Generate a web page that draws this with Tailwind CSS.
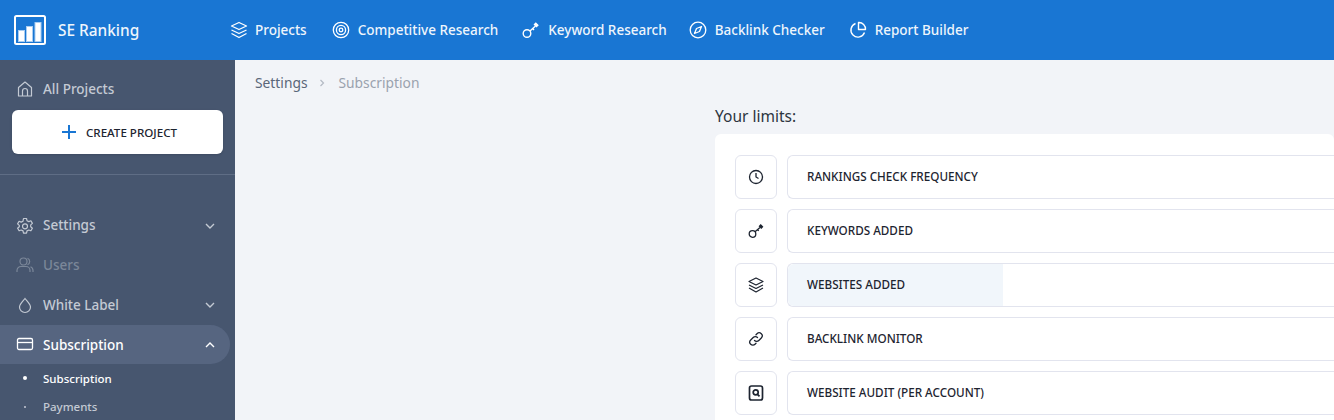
<!DOCTYPE html>
<html>
<head>
<meta charset="utf-8">
<script src="https://cdn.jsdelivr.net/npm/@tailwindcss/browser@4"></script>
</head>
<body class="font-['Noto_Sans',sans-serif] overflow-hidden">
<div class="w-[1334px] h-[420px] overflow-hidden flex flex-col bg-[#f2f4f8]">
  <header class="h-[60px] shrink-0 bg-[#1976d3] flex items-center text-white">
    <div class="w-[230px] shrink-0 pl-[14px] flex items-center gap-[12px]">
      <svg width="32" height="30" viewBox="0 0 32 30" fill="none"><rect x="1" y="1" width="30" height="28" rx="1.500" stroke="#fff" stroke-width="2"/><rect x="4.500" y="15.500" width="6" height="11" fill="#fff" stroke="#a9cdf1"/><rect x="12.500" y="11.500" width="6" height="15" fill="#fff" stroke="#a9cdf1"/><rect x="21" y="7.500" width="6" height="19" fill="#fff" stroke="#a9cdf1"/></svg>
      <span class="text-[15.400px] font-medium text-[#eef5fc] pt-[2px]">SE Ranking</span>
    </div>
    <nav class="flex items-center text-[13.500px] font-medium text-[#eef5fc]">
      <a class="flex items-center gap-[7px]"><svg width="18" height="18" viewBox="0 0 18 18" fill="none" stroke="#fff" stroke-width="1.300" stroke-linejoin="round"><path d="M9 1.500 16.500 5 9 8.500 1.500 5Z"/><path d="M1.500 9 9 12.500 16.500 9"/><path d="M1.500 12.500 9 16.500 16.500 12.500"/></svg>Projects</a>
      <a class="ml-[25px] flex items-center gap-[8px]"><svg width="18" height="18" viewBox="0 0 18 18" fill="none" stroke="#fff" stroke-width="1.300"><circle cx="9" cy="9" r="7.700"/><circle cx="9" cy="9" r="4.600"/><circle cx="9" cy="9" r="1.800"/></svg>Competitive Research</a>
      <a class="ml-[24px] flex items-center gap-[8px]"><svg width="18" height="18" viewBox="0 0 18 18" fill="none" stroke="#fff" stroke-width="1.400"><circle cx="5" cy="12.500" r="3.800"/><path d="M8 10 13.500 5"/><path d="M12.500 3.500l1.300-1.300 2 2-1.300 1.300-2-2Z" fill="#fff"/><path d="M10.500 7.500l1.500 1.500"/></svg>Keyword Research</a>
      <a class="ml-[22px] flex items-center gap-[8px]"><svg width="18" height="18" viewBox="0 0 18 18" fill="none" stroke="#fff" stroke-width="1.300" stroke-linejoin="round"><circle cx="9" cy="9" r="7.800"/><path d="M12.500 5.500 10.500 10.500 5.500 12.500 7.500 7.500Z"/></svg>Backlink Checker</a>
      <a class="ml-[24px] flex items-center gap-[8px]"><svg width="18" height="18" viewBox="0 0 18 18" fill="none" stroke="#fff" stroke-width="1.400" stroke-linejoin="round"><path d="M6.500 2.500A7 7 0 1 0 15.500 11.500"/><path d="M9.500 1.500A6.500 6.500 0 0 1 16.500 8.500H9.500Z"/></svg>Report Builder</a>
    </nav>
  </header>
  <div class="flex flex-1 min-h-0">
    <aside class="w-[235px] shrink-0 bg-[#47566f] flex flex-col">
      <a class="h-[20px] mt-[19px] pl-[16px] flex items-center gap-[9px] text-[13.500px] font-medium text-[#c4cad4]"><svg width="18" height="18" viewBox="0 0 18 18" fill="none" stroke="#c4cad4" stroke-width="1.200" stroke-linejoin="round"><path d="M2.500 7.500 9 2l6.500 5.500V16h-13Z"/><path d="M6.500 16v-5a2.500 2.500 0 0 1 5 0v5"/></svg><span>All Projects</span></a>
      <button class="mt-[11px] mx-[12px] h-[44px] pl-[4px] pt-px bg-white rounded-[6px] flex items-center justify-center gap-[10px] text-[11.600px] font-medium text-[#1d2430] shadow-sm"><svg width="14" height="14" viewBox="0 0 14 14" stroke="#1976d3" stroke-width="2"><path d="M7 0v14M0 7h14"/></svg>CREATE PROJECT</button>
      <div class="mt-[20px] h-px bg-[#5f6d85]"></div>
      <a class="mt-[31px] h-[40px] pl-[16px] pr-[20px] flex items-center gap-[9px] text-[13.500px] font-medium text-[#c4cad4]"><svg width="18" height="18" viewBox="0 0 18 18" fill="none" stroke="#c4cad4" stroke-width="1.200" stroke-linejoin="round"><path d="M7.500 1.500h3l.5 2.200 1.800.9 2.100-.8 1.500 2.600-1.700 1.500v1.800l1.700 1.500-1.500 2.600-2.100-.8-1.800.9-.5 2.200h-3l-.5-2.200-1.800-.9-2.100.8-1.500-2.600 1.700-1.500V8.400L1.600 6.900l1.500-2.600 2.100.8 1.800-.9Z"/><circle cx="9" cy="9.300" r="2.500"/></svg><span class="flex-1">Settings</span><svg width="10" height="6" viewBox="0 0 10 6" fill="none" stroke="#c4cad4" stroke-width="1.400"><path d="M1 1l4 4 4-4"/></svg></a>
      <a class="h-[40px] pl-[16px] flex items-center gap-[9px] text-[13.500px] font-medium text-[#7b8799]"><svg width="18" height="18" viewBox="0 0 18 18" fill="none" stroke="#7b8799" stroke-width="1.200"><circle cx="7.500" cy="5.500" r="3.500"/><path d="M1 16v-1.500a4 4 0 0 1 4-4h5a4 4 0 0 1 4 4V16M11.500 2.200a3.500 3.500 0 0 1 0 6.500M14.500 10.700a4 4 0 0 1 2.500 3.800V16"/></svg>Users</a>
      <a class="h-[40px] pl-[16px] pr-[20px] flex items-center gap-[9px] text-[13.500px] font-medium text-[#c4cad4]"><svg width="18" height="18" viewBox="0 0 18 18" fill="none" stroke="#c4cad4" stroke-width="1.200"><path d="M9 2.500C7 5 3.500 8 3.500 11a5.500 5.500 0 0 0 11 0C14.500 8 11 5 9 2.500Z"/></svg><span class="flex-1">White Label</span><svg width="10" height="6" viewBox="0 0 10 6" fill="none" stroke="#c4cad4" stroke-width="1.400"><path d="M1 1l4 4 4-4"/></svg></a>
      <a class="w-[230px] h-[40px] rounded-r-[20px] bg-[#566580] pl-[16px] pr-[15px] flex items-center gap-[9px] text-[13.500px] font-medium text-white"><svg width="18" height="18" viewBox="0 0 18 18" fill="none" stroke="#fff" stroke-width="1.300"><rect x="1.500" y="2.500" width="15" height="11" rx="1.500"/><path d="M1.500 6.500h15"/></svg><span class="flex-1 pt-[2px]">Subscription</span><svg width="10" height="6" viewBox="0 0 10 6" fill="none" stroke="#fff" stroke-width="1.400"><path d="M1 5l4-4 4 4"/></svg></a>
      <a class="h-[28px] pl-[23px] flex items-center gap-[16px] text-[11.500px] font-medium text-white"><span class="w-[4px] h-[4px] rounded-full bg-white"></span>Subscription</a>
      <a class="h-[28px] pl-[24px] pt-[2px] flex items-center gap-[17px] text-[11.500px] font-medium text-[#c4cad4]"><span class="w-[2px] h-[2px] rounded-full bg-[#c4cad4]"></span>Payments</a>
    </aside>
    <main class="flex-1 min-w-0">
      <div class="h-[46px] pl-[20px] flex items-center text-[13.800px] text-[#5a6679]"><span>Settings</span><svg class="ml-[11px] mr-[14px]" width="6" height="8" viewBox="0 0 6 8" fill="none" stroke="#b4bac4" stroke-width="1.200"><path d="M1.500 1l3 3-3 3"/></svg><span class="text-[#9aa2ae]">Subscription</span></div>
      <div class="pl-[480px]">
        <h2 class="h-[28px] text-[15.500px] leading-[20px] text-[#2c3440]">Your limits:</h2>
        <section class="bg-white rounded-t-[6px] h-[300px] pt-[21px] pl-[20px] flex flex-col gap-[10px]">
          <div class="flex gap-[10px] h-[44px]">
            <div class="w-[42px] shrink-0 flex items-center justify-center border border-[#e2e4ee] rounded-[6px]"><svg width="16" height="16" viewBox="0 0 16 16" fill="none" stroke="#1d2430" stroke-width="1.300"><circle cx="8" cy="8" r="6.500"/><path d="M8 4v4l2.500 1.500"/></svg></div>
            <div class="flex-1 flex items-center pl-[19px] border border-[#e2e4ee] rounded-l-[6px] border-r-0 text-[11.700px] font-medium text-[#1d2430]">RANKINGS CHECK FREQUENCY</div>
          </div>
          <div class="flex gap-[10px] h-[44px]">
            <div class="w-[42px] shrink-0 flex items-center justify-center border border-[#e2e4ee] rounded-[6px]"><svg width="16" height="16" viewBox="0 0 16 16" fill="none" stroke="#1d2430" stroke-width="1.300"><circle cx="4.500" cy="11" r="3.300"/><path d="M7 8.800 12 4.500"/><path d="M11.500 3.200l1.200-1.200 1.800 1.800-1.200 1.200Z" fill="#1d2430"/><path d="M9.500 6.700l1.200 1.200"/></svg></div>
            <div class="flex-1 flex items-center pl-[19px] border border-[#e2e4ee] rounded-l-[6px] border-r-0 text-[11.700px] font-medium text-[#1d2430]">KEYWORDS ADDED</div>
          </div>
          <div class="flex gap-[10px] h-[44px]">
            <div class="w-[42px] shrink-0 flex items-center justify-center border border-[#e2e4ee] rounded-[6px]"><svg width="16" height="16" viewBox="0 0 16 16" fill="none" stroke="#1d2430" stroke-width="1.200" stroke-linejoin="round"><path d="M8 1 15 4.500 8 8 1 4.500Z"/><path d="M1 8l7 3.500L15 8"/><path d="M1 11l7 4 7-4"/></svg></div>
            <div class="flex-1 relative flex items-center pl-[19px] border border-[#e2e4ee] rounded-l-[6px] border-r-0 text-[11.700px] font-medium text-[#1d2430]"><div class="absolute left-0 top-0 bottom-0 w-[215px] bg-[#f1f6fb] rounded-l-[6px]"></div><span class="relative">WEBSITES ADDED</span></div>
          </div>
          <div class="flex gap-[10px] h-[44px]">
            <div class="w-[42px] shrink-0 flex items-center justify-center border border-[#e2e4ee] rounded-[6px]"><svg width="16" height="16" viewBox="0 0 16 16" fill="none" stroke="#1d2430" stroke-width="1.300" stroke-linecap="round"><path d="M6.500 9.500a3 3 0 0 0 4.300 0l2.500-2.500a3 3 0 0 0-4.300-4.300L8 3.700"/><path d="M9.500 6.500a3 3 0 0 0-4.300 0L2.700 9a3 3 0 0 0 4.300 4.300L8 12.300"/></svg></div>
            <div class="flex-1 flex items-center pl-[19px] border border-[#e2e4ee] rounded-l-[6px] border-r-0 text-[11.700px] font-medium text-[#1d2430]">BACKLINK MONITOR</div>
          </div>
          <div class="flex gap-[10px] h-[44px]">
            <div class="w-[42px] shrink-0 flex items-center justify-center border border-[#e2e4ee] rounded-[6px]"><svg width="16" height="16" viewBox="0 0 16 16" fill="none" stroke="#1d2430" stroke-width="1.700"><rect x="1.500" y="1" width="13" height="14" rx="2"/><circle cx="7.700" cy="7.300" r="2.500"/><path d="M9.500 9.300l2 2"/></svg></div>
            <div class="flex-1 flex items-center pl-[19px] border border-[#e2e4ee] rounded-l-[6px] border-r-0 text-[11.700px] font-medium text-[#1d2430]">WEBSITE AUDIT (PER ACCOUNT)</div>
          </div>
        </section>
      </div>
    </main>
  </div>
</div>
</body>
</html>
